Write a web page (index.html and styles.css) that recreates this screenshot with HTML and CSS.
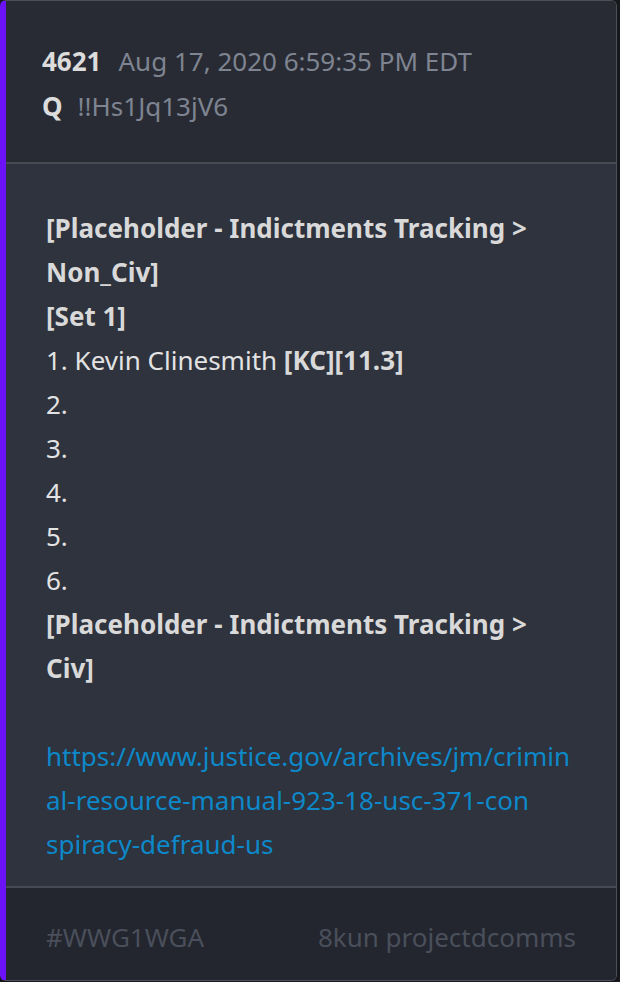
FILE: index.html
```html
<!DOCTYPE html>
<html lang="en">
<head>
    <meta charset="UTF-8">
    <title>Drop 4621</title>
    <link rel="stylesheet" href="styles.css">
</head>
<body>
    <div class="card">
        <div class="card-header">
            <div class="meta-row">
                <span class="post-num">4621</span>
                <span class="post-date">Aug 17, 2020 6:59:35 PM EDT</span>
            </div>
            <div class="meta-row author-row">
                <span class="author">Q</span>
                <span class="trip">!!Hs1Jq13jV6</span>
            </div>
        </div>

        <div class="card-body">
            <p class="line"><b>[Placeholder - Indictments Tracking &gt; Non_Civ]</b></p>
            <p class="line"><b>[Set 1]</b></p>
            <p class="line">1. Kevin Clinesmith <b>[KC][11.3]</b></p>
            <p class="line">2.</p>
            <p class="line">3.</p>
            <p class="line">4.</p>
            <p class="line">5.</p>
            <p class="line">6.</p>
            <p class="line"><b>[Placeholder - Indictments Tracking &gt; Civ]</b></p>
            <p class="line blank"></p>
            <p class="line link"><a href="#">https://www.justice.gov/archives/jm/crimin<br>al-resource-manual-923-18-usc-371-con<br>spiracy-defraud-us</a></p>
        </div>

        <div class="card-footer">
            <span>#WWG1WGA</span>
            <span>8kun projectdcomms</span>
        </div>
    </div>
</body>
</html>
```

FILE: styles.css
```css
html, body {
    background: #16181c;
}

body {
    margin: 0;
    font-family: 'Noto Sans', sans-serif;
}

.card {
    width: 610px;
    height: 979px;
    border: 1px solid #4a4f58;
    border-left: 6px solid #6b12f7;
    border-radius: 6px;
    display: flex;
    flex-direction: column;
    overflow: hidden;
}

.card-header {
    background: #282b33;
    padding: 38px 36px 0;
    height: 123px;
    border-bottom: 2px solid #454a53;
}

.meta-row {
    display: flex;
    align-items: baseline;
    gap: 17px;
    font-size: 26px;
    line-height: 45px;
}

.author-row {
    gap: 15px;
}

.post-num,
.author {
    color: #dcdcdc;
    font-weight: 700;
}

.post-date,
.trip {
    color: #7e8491;
}

.card-body {
    flex: 1;
    background: #2e333d;
    padding: 42px 40px 0;
    color: #e3e3e3;
    font-size: 26px;
    line-height: 44px;
}

.line {
    margin: 0;
}

.line b {
    color: #d9d9d9;
}

.link {
    word-break: break-all;
}

.blank {
    height: 44px;
}

.card-body a {
    color: #0d88c9;
    text-decoration: none;
}

.card-footer {
    background: #23262e;
    height: 86px;
    border-top: 2px solid #454a53;
    display: flex;
    justify-content: space-between;
    align-items: center;
    padding: 6px 40px 0;
    color: #4a4f5b;
    font-size: 26px;
}
```
